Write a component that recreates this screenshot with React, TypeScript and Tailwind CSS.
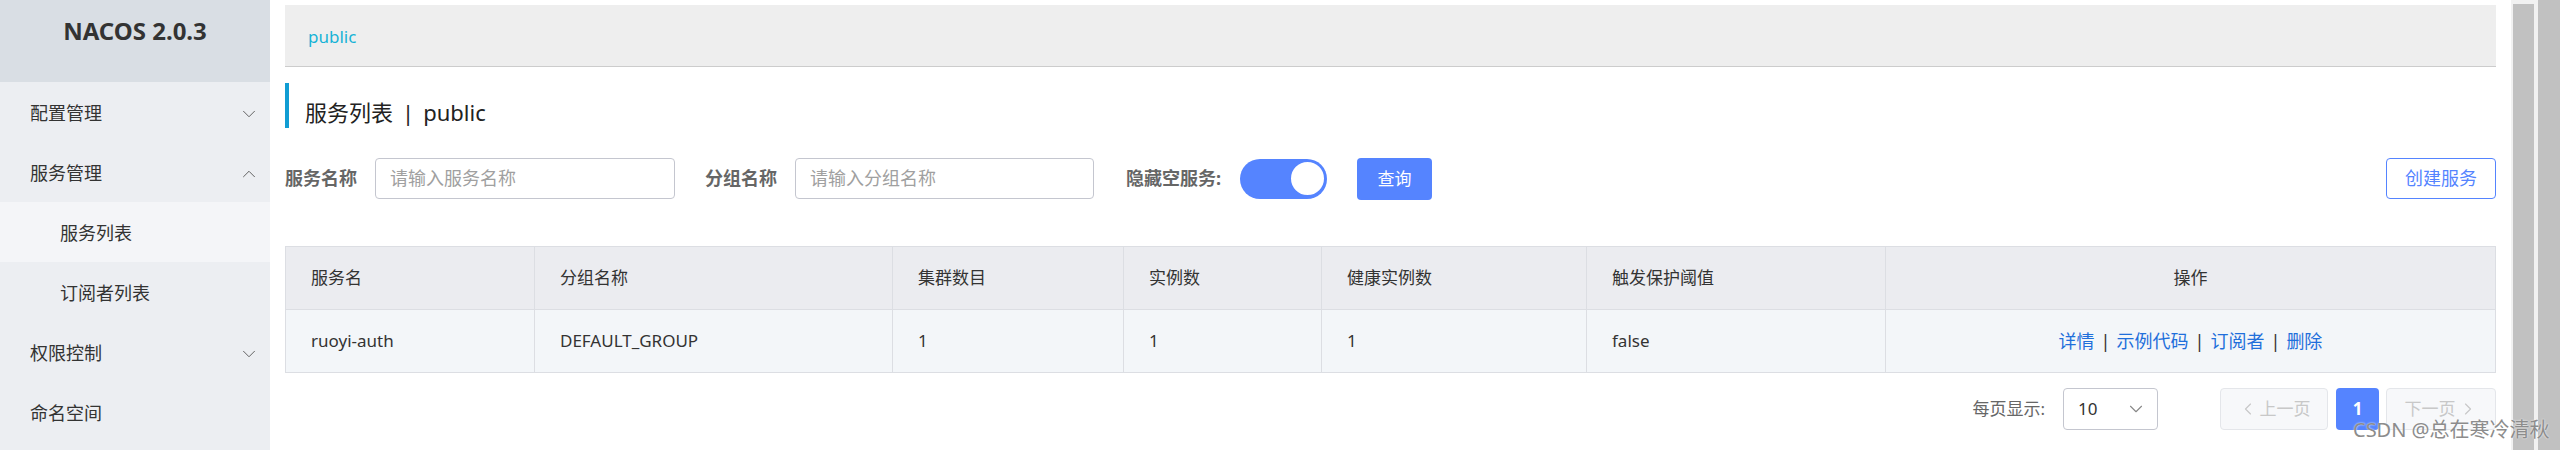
import { ChevronDown, ChevronUp, ChevronLeft, ChevronRight } from "lucide-react";

const menu = [
  { label: "配置管理", arrow: "down" },
  { label: "服务管理", arrow: "up" },
  { label: "服务列表", sub: true, active: true },
  { label: "订阅者列表", sub: true },
  { label: "权限控制", arrow: "down" },
  { label: "命名空间" },
];

const columns = ["服务名", "分组名称", "集群数目", "实例数", "健康实例数", "触发保护阈值"];
const row = ["ruoyi-auth", "DEFAULT_GROUP", "1", "1", "1", "false"];
const actions = ["详情", "示例代码", "订阅者", "删除"];

function Sidebar() {
  return (
    <aside className="w-[270px] shrink-0 h-full bg-[#eceef2] flex flex-col">
      <div className="h-[82px] bg-[#d9dee4] flex justify-center pt-[14px]">
        <span className="text-[24px] font-bold text-[#333] leading-[34px]">NACOS 2.0.3</span>
      </div>
      {menu.map((m) => (
        <div
          key={m.label}
          className={`h-[60px] flex items-center justify-between pr-[10px] pt-[3px] text-[18px] text-[#333] ${
            m.sub ? "pl-[60px]" : "pl-[30px]"
          } ${m.active ? "bg-[#f4f5f8]" : ""}`}
        >
          <span>{m.label}</span>
          {m.arrow === "down" && <ChevronDown size={22} strokeWidth={1} className="text-[#555]" />}
          {m.arrow === "up" && <ChevronUp size={22} strokeWidth={1} className="text-[#555]" />}
        </div>
      ))}
    </aside>
  );
}

function SearchBar() {
  return (
    <div className="mt-[30px] flex items-center h-[41px]">
      <span className="text-[18px] font-bold text-[#666] w-[90px]">服务名称</span>
      <div className="w-[300px] h-[41px] border border-[#c4c6cf] rounded-[4px] flex items-center pl-[14px] text-[18px] text-[#a0a0a0]">
        请输入服务名称
      </div>
      <span className="ml-[30px] text-[18px] font-bold text-[#666] w-[90px]">分组名称</span>
      <div className="w-[299px] h-[41px] border border-[#c4c6cf] rounded-[4px] flex items-center pl-[14px] text-[18px] text-[#a0a0a0]">
        请输入分组名称
      </div>
      <span className="ml-[32px] text-[18px] font-bold text-[#666] w-[114px]">隐藏空服务:</span>
      <div className="w-[87px] h-[40px] rounded-full bg-[#5584ff] flex items-center justify-end pr-[1px]">
        <div className="w-[37px] h-[37px] rounded-full bg-white border-2 border-[#5584ff]" />
      </div>
      <div className="ml-[30px] w-[75px] h-[42px] rounded-[4px] bg-[#5584ff] text-white text-[17px] flex items-center justify-center">
        查询
      </div>
      <div className="ml-auto w-[110px] h-[41px] rounded-[4px] border border-[#5584ff] text-[#5584ff] text-[18px] flex items-center justify-center">
        创建服务
      </div>
    </div>
  );
}

function Table() {
  const grid = "grid grid-cols-[249px_358px_231px_198px_265px_299px_1fr]";
  return (
    <div className="mt-[47px] border border-[#dcdee3] text-[17px] text-[#333]">
      <div className={`${grid} h-[63px] bg-[#ebecf0] border-b border-[#dcdee3]`}>
        {columns.map((c) => (
          <div key={c} className="flex items-center pl-[25px] border-r border-[#dcdee3]">
            {c}
          </div>
        ))}
        <div className="flex items-center justify-center">操作</div>
      </div>
      <div className={`${grid} h-[62px] bg-[#f3f6f9]`}>
        {row.map((c, i) => (
          <div key={i} className="flex items-center pl-[25px] border-r border-[#dcdee3]">
            {c}
          </div>
        ))}
        <div className="flex items-center justify-center text-[18px]">
          {actions.map((a, i) => (
            <span key={a} className="flex items-center">
              {i > 0 && <span className="mx-[6px] text-[#333]">|</span>}
              <span className="text-[#1f6fdb]">{a}</span>
            </span>
          ))}
        </div>
      </div>
    </div>
  );
}

function Pagination() {
  return (
    <div className="mt-[15px] flex items-center justify-end h-[42px] text-[17px]">
      <span className="text-[#666]">每页显示:</span>
      <div className="ml-[18px] w-[95px] h-[42px] border border-[#c4c6cf] rounded-[4px] flex items-center justify-between pl-[14px] pr-[10px] text-[#333]">
        <span>10</span>
        <ChevronDown size={22} strokeWidth={1.2} className="text-[#888]" />
      </div>
      <div className="ml-[62px] w-[108px] h-[42px] rounded-[4px] border border-[#e4e6ea] bg-[#f7f8fa] flex items-center justify-center text-[#c8c8c8]">
        <ChevronLeft size={20} strokeWidth={1.4} className="mr-[2px]" />
        上一页
      </div>
      <div className="ml-[8px] w-[43px] h-[42px] rounded-[4px] bg-[#5584ff] text-white font-bold flex items-center justify-center">
        1
      </div>
      <div className="ml-[7px] w-[110px] h-[42px] rounded-[4px] border border-[#e4e6ea] bg-[#f7f8fa] flex items-center justify-center text-[#c8c8c8]">
        下一页
        <ChevronRight size={20} strokeWidth={1.4} className="ml-[2px]" />
      </div>
    </div>
  );
}

export default function App() {
  return (
    <div className="relative w-[2560px] h-[450px] overflow-hidden flex bg-white font-['Noto_Sans','Noto_Sans_CJK_SC',sans-serif]">
      <Sidebar />
      <main className="flex-1 min-w-0 px-[15px] pt-[5px]">
        <div className="h-[62px] bg-[#eeeeee] border-b border-[#cccccc] flex items-center pl-[23px] pt-[2px] text-[17px] text-[#17b3d6]">
          public
        </div>
        <div className="mt-[16px] h-[45px] border-l-4 border-[#119dd3] flex items-center pl-[16px] pt-[13px] text-[22px] text-[#222]">
          服务列表<span className="mx-[9px]">|</span>public
        </div>
        <SearchBar />
        <Table />
        <Pagination />
      </main>
      <div className="w-[27px] h-full bg-[#f1f1f1] pl-[2px] pr-[4px] pt-[4px]">
        <div className="h-full bg-[#c1c1c1]" />
      </div>
      <div className="w-[22px] h-full bg-[#c1c1c1]" />
      <div className="absolute left-[2353px] top-[417px] text-[20px] leading-[26px] text-[#8c8c8c] [text-shadow:0_0_2px_#fff]">
        CSDN @总在寒冷清秋
      </div>
    </div>
  );
}
